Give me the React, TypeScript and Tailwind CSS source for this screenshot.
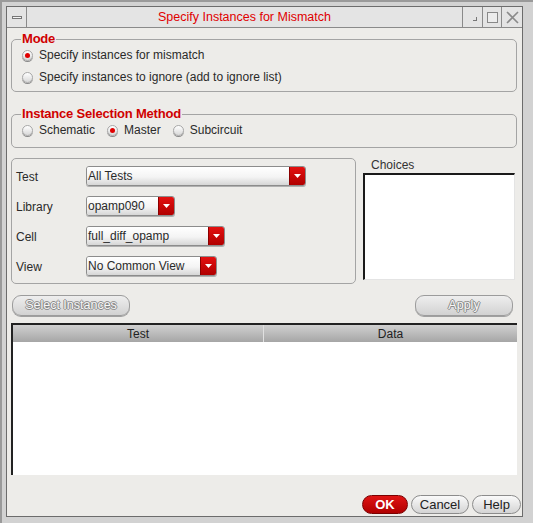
import React from "react";

const FONT = "font-['Liberation_Sans',Arial,sans-serif]";

function Radio({ on }: { on?: boolean }) {
  return (
    <span className="relative inline-flex w-[11px] h-[11px] rounded-full shrink-0 bg-[linear-gradient(#ffffff,#d8d8d8)] border border-[#a8a8a8] shadow-[0_1px_0_#8a8a8a] items-center justify-center">
      {on && <span className="w-[5px] h-[5px] rounded-full bg-[#e00000]" />}
    </span>
  );
}

function RadioItem({ label, on }: { label: string; on?: boolean }) {
  return (
    <label className="flex items-center gap-[6px] h-[18px]">
      <Radio on={on} />
      <span>{label}</span>
    </label>
  );
}

function Legend({ children }: { children: React.ReactNode }) {
  return (
    <legend className="-ml-[1px] px-[1px] text-[13px] leading-[14px] font-bold tracking-[-0.2px] text-[#d00000]">{children}</legend>
  );
}

function Combo({ value, width }: { value: string; width: string }) {
  return (
    <div className={`flex h-[20px] ${width} rounded-[3px] border border-[#8c8c8c] overflow-hidden shadow-[0_1px_0_#b0b0b0]`}>
      <div className="flex-1 flex items-center pl-[1px] bg-[linear-gradient(#ffffff,#f4f4f4_55%,#d6d6d6)] text-[12px]">{value}</div>
      <div className="w-[16px] flex items-center justify-center bg-[linear-gradient(#e41010,#b00000)] border-l border-[#8a0000]">
        <svg width="7" height="4" viewBox="0 0 7 4">
          <path d="M0 0h7L3.5 4z" fill="#fff" />
        </svg>
      </div>
    </div>
  );
}

function Row({ label, children }: { label: string; children: React.ReactNode }) {
  return (
    <div className="flex items-center h-[20px]">
      <span className="w-[70px] pt-[2px]">{label}</span>
      {children}
    </div>
  );
}

function DisabledButton({ label, width }: { label: string; width: string }) {
  return (
    <button className={`${width} h-[21px] rounded-[9px] border border-[#9c9c9c] bg-[linear-gradient(#eeeeee,#d2d2d2)] shadow-[0_1px_0_#a0a0a0] text-[12.5px] text-[#f6f6f6] [text-shadow:1px_0_0_#8a8a8a,-1px_0_0_#8a8a8a,0_1px_0_#8a8a8a,0_-1px_0_#8a8a8a]`}>
      {label}
    </button>
  );
}

function PushButton({ label, width, primary }: { label: string; width: string; primary?: boolean }) {
  return primary ? (
    <button className={`${width} h-[19px] rounded-[10px] border border-[#7a0000] bg-[linear-gradient(#e01414,#b00000)] text-white font-bold text-[13px] leading-none`}>
      {label}
    </button>
  ) : (
    <button className={`${width} h-[19px] rounded-[10px] border border-[#8c8c8c] bg-[linear-gradient(#fafafa,#d4d4d4)] text-[#222] text-[13px] leading-none`}>
      {label}
    </button>
  );
}

export default function App() {
  return (
    <div className={`${FONT} w-[533px] h-[523px] bg-[#d2d2d2] border-l-2 border-t-2 border-[#9a9a9a] pl-[4px] pt-[4px] text-[12px] text-[#2a2a2a]`}>
      <div className="w-[517px] h-[511px] border border-[#6c6c6c] flex flex-col bg-[#edece9]">
        {/* title bar */}
        <div className="h-[21px] flex items-stretch bg-[#e4e4e4] border-b border-[#8a8a8a]">
          <div className="w-[20px] flex items-center justify-center border-r border-[#8a8a8a]">
            <span className="w-[10px] h-[3px] border border-[#777] bg-[#f4f4f4]" />
          </div>
          <div className="flex-1 flex items-center justify-center text-[12.5px] text-[#e00000]">
            Specify Instances for Mismatch
          </div>
          <div className="w-[20px] flex items-end justify-center pb-[6px] border-l border-[#8a8a8a]">
            <span className="w-[4px] h-[4px] border-r border-b border-[#777] ml-[4px]" />
          </div>
          <div className="w-[19px] flex items-center justify-center border-l border-[#8a8a8a]">
            <span className="w-[11px] h-[11px] border border-[#888] bg-[#ececec]" />
          </div>
          <div className="w-[21px] flex items-center justify-center border-l border-[#8a8a8a]">
            <svg width="13" height="13" viewBox="0 0 13 13">
              <path d="M1 1L12 12M12 1L1 12" stroke="#8a8a8a" strokeWidth="1.6" />
            </svg>
          </div>
        </div>

        {/* content */}
        <div className="flex-1 flex flex-col pl-[4px] pr-[5px] pt-[4px]">
          <fieldset className="border border-[#a4a4a4] rounded-[5px] px-[10px] pb-[5px]">
            <Legend>Mode</Legend>
            <div className="flex flex-col gap-[4px]">
              <RadioItem label="Specify instances for mismatch" on />
              <RadioItem label="Specify instances to ignore (add to ignore list)" />
            </div>
          </fieldset>

          <fieldset className="mt-[15px] border border-[#a4a4a4] rounded-[5px] px-[10px] pb-[8px]">
            <Legend>Instance Selection Method</Legend>
            <div className="flex gap-[12px]">
              <RadioItem label="Schematic" />
              <RadioItem label="Master" on />
              <RadioItem label="Subcircuit" />
            </div>
          </fieldset>

          <div className="mt-[10px] flex gap-[7px]">
            <div className="w-[345px] h-[126px] border border-[#a4a4a4] rounded-[5px] pl-[4px] pt-[7px] flex flex-col gap-[10px]">
              <Row label="Test">
                <Combo value="All Tests" width="w-[220px]" />
              </Row>
              <Row label="Library">
                <Combo value="opamp090" width="w-[89px]" />
              </Row>
              <Row label="Cell">
                <Combo value="full_diff_opamp" width="w-[139px]" />
              </Row>
              <Row label="View">
                <Combo value="No Common View" width="w-[131px]" />
              </Row>
            </div>
            <div className="flex flex-col w-[152px]">
              <span className="pl-[8px] leading-[14px] h-[15px] text-[#333]">Choices</span>
              <div className="h-[107px] bg-white border-t-2 border-l-2 border-[#1a1a1a] border-r border-b border-r-[#e4e4e4] border-b-[#e4e4e4]" />
            </div>
          </div>

          <div className="mt-[11px] flex justify-between pl-[1px] pr-[4px]">
            <DisabledButton label="Select Instances" width="w-[118px]" />
            <DisabledButton label="Apply" width="w-[98px]" />
          </div>

          <div className="mt-[7px] h-[152px] flex flex-col bg-white border-t-2 border-l-2 border-[#222]">
            <div className="h-[17px] flex bg-[linear-gradient(#d0d0d0,#a6a6a6)] text-[12px] text-[#222]">
              <div className="w-[251px] flex items-center justify-center border-r border-[#e0e0e0]">Test</div>
              <div className="flex-1 flex items-center justify-center">Data</div>
            </div>
            <div className="flex-1" />
          </div>

          <div className="mt-[20px] flex justify-end gap-[3px] -mr-[4px]">
            <PushButton label="OK" width="w-[46px]" primary />
            <PushButton label="Cancel" width="w-[58px]" />
            <PushButton label="Help" width="w-[49px]" />
          </div>
        </div>
      </div>
    </div>
  );
}
